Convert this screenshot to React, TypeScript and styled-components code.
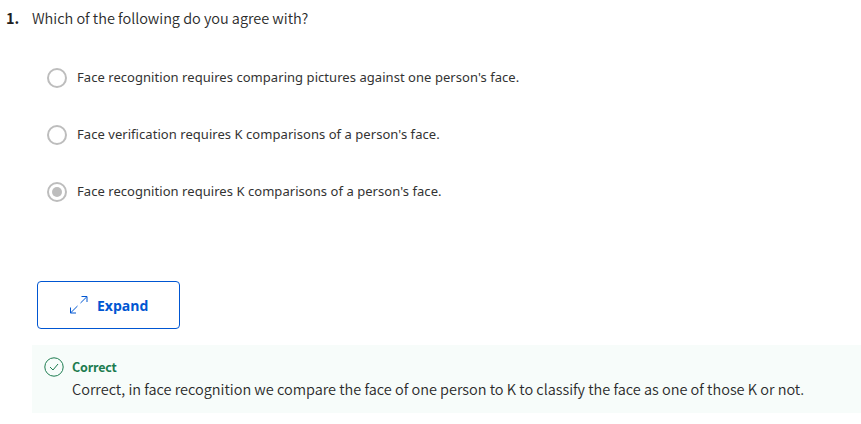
import React from "react";
import styled, { createGlobalStyle } from "styled-components";

const GlobalStyle = createGlobalStyle`
  * { box-sizing: border-box; }
  body { margin: 0; background: #fff; color: #2b2b2b; font-family: "Noto Sans", sans-serif; }
`;

const Page = styled.main`
  width: 861px;
  height: 424px;
  overflow: hidden;
  display: flex;
  flex-direction: column;
`;

const Question = styled.header`
  display: flex;
  height: 49px;
  padding: 6px 0 0 6px;
  line-height: 24px;
  font-family: "Noto Sans CJK SC", sans-serif;
  font-size: 14.5px;
`;

const Num = styled.span`
  width: 26px;
  color: #1f1f1f;
  font-weight: 700;
`;

const Prompt = styled.span`
  font-weight: 350;
  letter-spacing: -0.03px;
  white-space: nowrap;
`;

const Options = styled.div`
  display: flex;
  flex-direction: column;
  padding-left: 47px;
`;

const Option = styled.label`
  display: flex;
  align-items: center;
  gap: 10px;
  height: 57px;
  color: #333;
  font-size: 13px;
  letter-spacing: 0.05px;
  white-space: nowrap;
`;

const OptionText = styled.span`
  padding-bottom: 2px;
`;

const Radio = styled.span<{ $on?: boolean }>`
  display: grid;
  place-items: center;
  width: 20px;
  height: 20px;
  border: 2px solid #bdbdbd;
  border-radius: 50%;
  &::after {
    content: "";
    width: 10px;
    height: 10px;
    border-radius: 50%;
    background: ${(p) => (p.$on ? "#bdbdbd" : "transparent")};
  }
`;

const Expand = styled.button`
  display: flex;
  align-items: center;
  gap: 8px;
  width: 143px;
  height: 48px;
  margin: 61px 0 0 37px;
  padding: 0 0 0 31px;
  border: 1px solid #0056d2;
  border-radius: 4px;
  background: #fff;
  color: #0056d2;
  font: 700 14px "Open Sans", sans-serif;
`;

const Feedback = styled.section`
  display: flex;
  gap: 8px;
  height: 68px;
  margin: 16px 0 0 32px;
  padding: 12px 0 0 12px;
  background: #f7fcfa;
  font-family: "Noto Sans CJK SC", sans-serif;
`;

const Title = styled.div`
  color: #1d7c50;
  font-size: 12.5px;
  font-weight: 700;
  letter-spacing: -0.15px;
  line-height: 20px;
`;

const Message = styled.div`
  font-size: 14.5px;
  font-weight: 350;
  letter-spacing: -0.015px;
  line-height: 24px;
  white-space: nowrap;
`;

const options = [
  "Face recognition requires comparing pictures against one person's face.",
  "Face verification requires K comparisons of a person's face.",
  "Face recognition requires K comparisons of a person's face.",
];

export default function App() {
  return (
    <Page>
      <GlobalStyle />
      <Question>
        <Num>1.</Num>
        <Prompt>Which of the following do you agree with?</Prompt>
      </Question>
      <Options>
        {options.map((text, i) => (
          <Option key={text}>
            <Radio $on={i === 2} />
            <OptionText>{text}</OptionText>
          </Option>
        ))}
      </Options>
      <Expand>
        <svg width="20" height="20" viewBox="0 0 20 20" fill="none" stroke="currentColor">
          <path d="M12.500 1.500H18V7M17.800 1.800L11.500 8M1.500 12.500V18H7M1.800 17.700L8.500 11" />
        </svg>
        Expand
      </Expand>
      <Feedback>
        <svg width="20" height="20" viewBox="0 0 20 20" fill="none" stroke="#1d7c50">
          <circle cx="10" cy="10" r="9.200" />
          <path d="M6 10l3 3 5-6" />
        </svg>
        <div>
          <Title>Correct</Title>
          <Message>Correct, in face recognition we compare the face of one person to K to classify the face as one of those K or not.</Message>
        </div>
      </Feedback>
    </Page>
  );
}
